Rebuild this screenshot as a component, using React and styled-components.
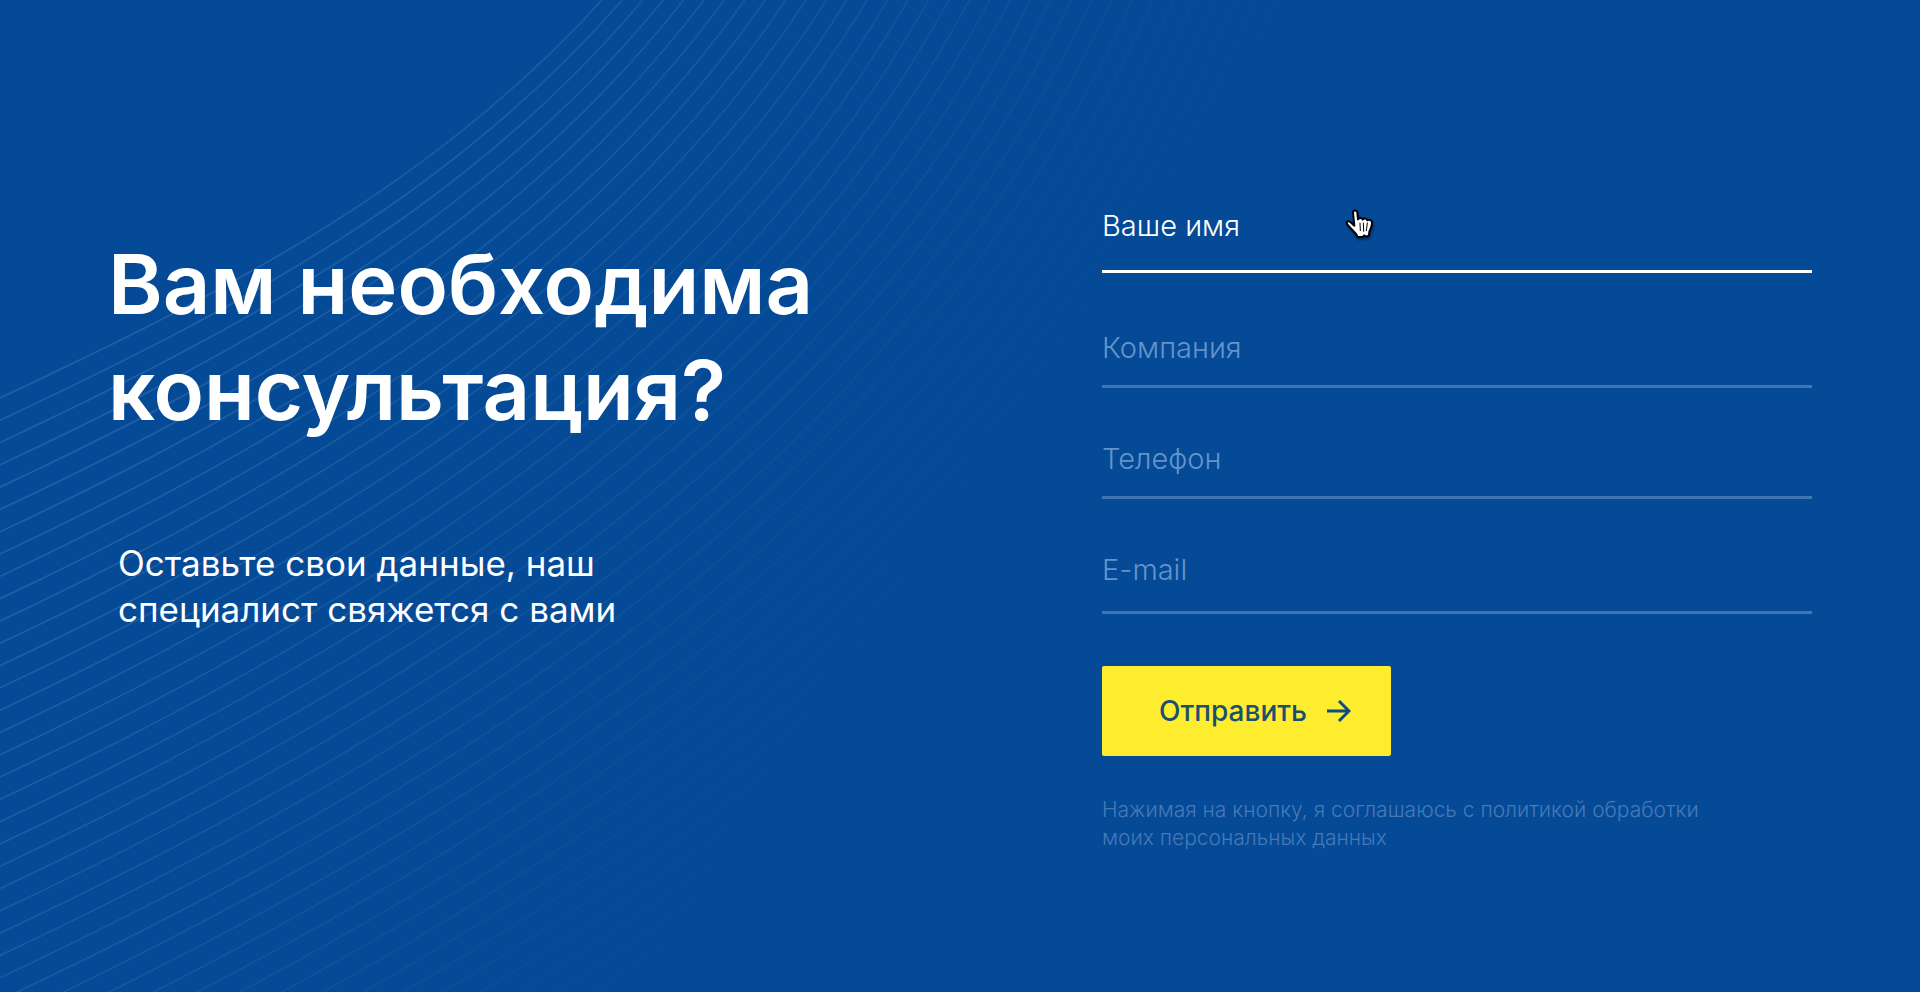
import React from "react";
import styled, { createGlobalStyle } from "styled-components";

const GlobalStyle = createGlobalStyle`
  *, *::before, *::after { box-sizing: border-box; }
  body {
    margin: 0;
    background: #044a96;
    color: #fff;
    font-family: Inter, "Liberation Sans", sans-serif;
  }
  h1, p { margin: 0; }
`;

const Section = styled.main`
  position: relative;
  display: grid;
  grid-template-columns: 7fr 5fr;
  align-items: start;
  min-height: 100vh;
  padding: 207px 108px 100px;
  overflow: hidden;
`;

const Waves = styled.svg`
  position: absolute;
  inset: 0;
  width: 100%;
  height: 100%;
  pointer-events: none;
`;

const Intro = styled.div`
  position: relative;
  padding-top: 24px;
`;

const Title = styled.h1`
  font-size: 83px;
  font-weight: 600;
  line-height: 106px;
`;

const Lead = styled.p`
  margin-top: 97px;
  padding-left: 10px;
  font-size: 35px;
  line-height: 46px;
`;

const Form = styled.form`
  position: relative;
  display: flex;
  flex-direction: column;
  align-items: flex-start;
`;

const Field = styled.div`
  position: relative;
  width: 100%;
  margin-top: ${(p) => p.$above || 0}px;
`;

const Input = styled.input`
  display: block;
  width: 100%;
  height: ${(p) => 39 + p.$below}px;
  padding: 0 0 ${(p) => p.$below}px;
  border: 0;
  border-bottom: 3px solid ${(p) => (p.$active ? "#fff" : "#4175b0")};
  border-radius: 0;
  outline: 0;
  background: transparent;
  color: #fff;
  font: 300 29px/36px Inter, "Liberation Sans", sans-serif;

  &::placeholder {
    color: ${(p) => (p.$active ? "#fff" : "#6494ca")};
    opacity: 1;
  }
`;

const Pointer = styled.svg`
  position: absolute;
  top: -12px;
  left: 228px;
  width: 60px;
  height: 60px;
  filter: drop-shadow(1px 2px 1px rgba(0, 0, 0, 0.4));
  pointer-events: none;
`;

const Submit = styled.button`
  display: flex;
  align-items: center;
  gap: 20px;
  height: 90px;
  margin-top: 52px;
  padding: 0 40px 0 57px;
  border: 0;
  border-radius: 2px;
  background: #feed2f;
  color: #1a4f70;
  font: 500 28px/36px Inter, "Liberation Sans", sans-serif;
  cursor: pointer;
`;

const Arrow = styled.svg`
  width: 24px;
  height: 24px;
  fill: none;
  stroke: #0d4c83;
  stroke-width: 3;
`;

const Consent = styled.p`
  margin-top: 40px;
  color: #4779b6;
  font-size: 21px;
  font-weight: 300;
  line-height: 28px;
`;

const curves = Array.from({ length: 42 }, (_, k) => {
  const y0 = 398 + 22.3 * k;
  const x3 = 602 + 20.4 * k;
  const slope = 1.1 + 0.043 * k;
  const a = 235 + 9.6 * k;
  const b = 168 + 1.5 * k;
  return `M0 ${y0} C${a} ${y0 - 0.47 * a} ${x3 - b} ${b * slope} ${x3} 0`;
});

const fields = [
  { name: "name", label: "Ваше имя", below: 27, active: true },
  { name: "company", label: "Компания", above: 56, below: 20 },
  { name: "phone", label: "Телефон", type: "tel", above: 52, below: 20 },
  { name: "email", label: "E-mail", type: "email", above: 52, below: 24 },
];

function Hand() {
  return (
    <Pointer viewBox="0 0 180 180" aria-hidden="true">
      <path
        d="M69 53C69 44 82 44 82 53L84 73C88 67 96 68 98 74C102 69 110 70 112 76C117 72 127 76 126 84C126 96 122 102 118 110L117 121Q112 125 106 124L103 121L98 126H83L78 117C70 108 60 98 52 88C46 80 54 76 61 81L73 92Z"
        fill="#fff"
        stroke="#000"
        strokeWidth="6"
        strokeLinejoin="round"
      />
      <path
        d="M90 84L91 107M100 84L101 109M112 84L109 107"
        fill="none"
        stroke="#000"
        strokeWidth="3"
        strokeLinecap="round"
      />
    </Pointer>
  );
}

export default function App() {
  return (
    <>
      <GlobalStyle />
      <Section>
        <Waves viewBox="0 0 1920 992" preserveAspectRatio="xMinYMin slice" aria-hidden="true">
          <defs>
            <linearGradient id="fade" gradientUnits="userSpaceOnUse" x1="290" y1="193" x2="920" y2="610">
              <stop offset="0" stopColor="#fff" stopOpacity="0.12" />
              <stop offset="1" stopColor="#fff" stopOpacity="0" />
            </linearGradient>
          </defs>
          <g fill="none" stroke="url(#fade)" strokeWidth="1.6">
            {curves.map((d) => (
              <path key={d} d={d} />
            ))}
          </g>
        </Waves>
        <Intro>
          <Title>
            Вам необходима
            <br />
            консультация?
          </Title>
          <Lead>
            Оставьте свои данные, наш
            <br />
            специалист свяжется с вами
          </Lead>
        </Intro>
        <Form onSubmit={(e) => e.preventDefault()}>
          {fields.map((f) => (
            <Field key={f.name} $above={f.above}>
              <Input
                type={f.type || "text"}
                name={f.name}
                aria-label={f.label}
                placeholder={f.label}
                $below={f.below}
                $active={f.active}
              />
              {f.active && <Hand />}
            </Field>
          ))}
          <Submit type="submit">
            Отправить
            <Arrow viewBox="0 0 24 24" aria-hidden="true">
              <path d="M0 12H22M12 2L22 12L12 22" />
            </Arrow>
          </Submit>
          <Consent>
            Нажимая на кнопку, я соглашаюсь с политикой обработки
            <br />
            моих персональных данных
          </Consent>
        </Form>
      </Section>
    </>
  );
}
